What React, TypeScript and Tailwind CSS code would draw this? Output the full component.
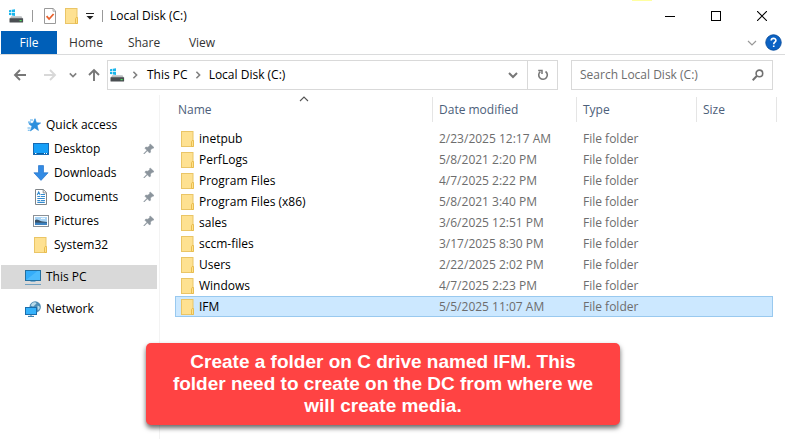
import type { ReactNode } from "react";

type IconProps = { className?: string };

function DriveIcon({ className = "" }: IconProps) {
  return (
    <svg className={`shrink-0 ${className}`} width="16" height="16" viewBox="0 0 16 16" aria-hidden="true">
      <path d="M1 2.2 3.4 1.800v2.400H1zM4 1.700 7 1.200v3H4zM1 4.900h2.400v2.400L1 6.900zM4 4.900h3v3l-3-.5z" fill="#19b5ec" />
      <path d="M3.200 8.200h10.300L15 11H1.600z" fill="#b9bcbf" />
      <rect x="1.500" y="10.200" width="13.600" height="4.300" rx=".6" fill="#4a4e52" />
      <rect x="11.600" y="12" width="2" height="1.200" fill="#4be35b" />
    </svg>
  );
}

function FolderIcon({ className = "" }: IconProps) {
  return (
    <svg className={`shrink-0 ${className}`} width="14" height="16" viewBox="0 0 14 16" aria-hidden="true">
      <rect x=".5" y=".5" width="11.500" height="15" fill="#fee191" stroke="#eac566" />
      <path d="M10.500 15.500v-4.700l.7-1.300h1.300v6z" fill="#ffe28a" stroke="#e6b94a" strokeWidth=".9" />
    </svg>
  );
}

function PropertiesIcon() {
  return (
    <svg className="shrink-0" width="14" height="16" viewBox="0 0 14 16" aria-hidden="true">
      <path d="M1.500.5h8.600l2.400 2.400v12.600h-11z" fill="#fff" stroke="#9a9a9a" />
      <path d="M10 .8v2.400h2.400" fill="none" stroke="#9a9a9a" strokeWidth=".8" />
      <path d="m3.600 8.200 2.500 2.800 4.500-5" fill="none" stroke="#e8602c" strokeWidth="1.800" />
    </svg>
  );
}

function StarIcon() {
  return (
    <svg className="shrink-0" width="16" height="16" viewBox="0 0 16 16" aria-hidden="true">
      <path d="m9 1.700 1.400 4.100 4.200.2-3.500 2.600 1.300 4.800-3.700-2.500-4.300 3 1.600-4.600-3.200-2.600 4.400-.6z" fill="#2b8fdd" stroke="#2b8fdd" strokeWidth=".7" />
      <path d="M4 3h3M2 5.100h3M1.500 11h3M1.800 13.200h2" stroke="#5fb0ea" strokeWidth="1.100" />
    </svg>
  );
}

function DesktopIcon() {
  return (
    <svg className="shrink-0" width="16" height="16" viewBox="0 0 16 16" aria-hidden="true">
      <rect x=".5" y="2.500" width="15" height="11" fill="#17a0f8" stroke="#176ab3" />
      <path d="M1 12.500h14" stroke="#0762a8" />
      <path d="M2 12.500h1.400M11 12.500h1M13 12.500h1" stroke="#fff" />
    </svg>
  );
}

function DownloadIcon() {
  return (
    <svg className="shrink-0" width="16" height="16" viewBox="0 0 16 16" aria-hidden="true">
      <path d="M5.500.6h5v7.200h4.600L8 15.400.9 7.800h4.600z" fill="#338be4" stroke="#2573cb" strokeWidth=".7" />
    </svg>
  );
}

function DocumentIcon() {
  return (
    <svg className="shrink-0" width="16" height="16" viewBox="0 0 16 16" aria-hidden="true">
      <path d="M2.500.5h7.800l3.200 3.200v11.800h-11z" fill="#fff" stroke="#7f8589" />
      <path d="M10.200.7v3.200h3.200" fill="none" stroke="#7f8589" strokeWidth=".9" />
      <path d="m4.200 6 1.500-3 1.500 3M8 5.500h4M4.300 7.500h3M8 7.500h4M4.300 9.500h7.500M4.300 11.500h3M8 11.500h4M4.300 13.400h7.500" fill="none" stroke="#348bcf" strokeWidth="1.100" />
    </svg>
  );
}

function PictureIcon() {
  return (
    <svg className="shrink-0" width="16" height="16" viewBox="0 0 16 16" aria-hidden="true">
      <rect x=".5" y="2.500" width="15" height="11" fill="#fff" stroke="#8b9197" />
      <rect x="2" y="4" width="12" height="8" fill="#a9d4f5" />
      <path d="M2 7.200c2-1.500 3.300-.2 5 .6s4 .8 7 1.200v1.200H2z" fill="#3a5166" />
      <path d="M2 9.600h12V12H2z" fill="#3d83c2" />
      <path d="M8 5.800c1.400-1.300 2.600 0 4-.4" fill="none" stroke="#fff" />
    </svg>
  );
}

function ComputerIcon() {
  return (
    <svg className="shrink-0" width="18" height="16" viewBox="0 0 18 16" aria-hidden="true">
      <rect x="1.500" y="1.500" width="15" height="10" fill="#34adfa" stroke="#246f9f" />
      <path d="M2 11 13.500 2H16v9z" fill="#5cc5ff" opacity=".6" />
      <path d="M6.500 12.500h5" stroke="#77aacc" />
      <path d="M1 15.500h16" stroke="#6f9fbf" />
    </svg>
  );
}

function NetworkIcon() {
  return (
    <svg className="shrink-0" width="18" height="16" viewBox="0 0 18 16" aria-hidden="true">
      <circle cx="11.200" cy="6" r="5.700" fill="#4f8db4" />
      <path d="M8 2.200c2-1.700 4-.9 4.400 0s-1.700 1.200-2 2.400S7.700 5.600 6.700 4.600zM13.400 4.700c1.500-.3 2.400.8 2.400 1.800s-1 2.500-2 2.500z" fill="#b9dae9" />
      <rect x="1.500" y="6.500" width="11" height="7" fill="#35b2fb" stroke="#1a6dac" />
      <path d="M7 13.500v1.500M4 15.400h6" stroke="#2774a8" />
    </svg>
  );
}

function PinIcon() {
  return (
    <svg className="shrink-0" width="12" height="12" viewBox="0 0 12 12" aria-hidden="true">
      <path d="m7.300 1 3.700 3.600-1.100.8-.6-.2-1.800 1.900.1 2-1 1L4.400 7.800 1.200 11l-.4-.4L3.900 7.300 1.800 5l1.100-.9 2 .1 1.900-1.800-.3-.6z" fill="#8b949c" stroke="#8b949c" strokeWidth=".5" />
    </svg>
  );
}

function Chevron({ dir, color = "#808080", size = 8, width = 1.5 }: { dir: "down" | "right" | "up"; color?: string; size?: number; width?: number }) {
  const d = { down: "m1 3 4 4 4-4", right: "m3 1 4 4-4 4", up: "m1 7 4-4 4 4" }[dir];
  return (
    <svg className="shrink-0" width={size} height={size} viewBox="0 0 10 10" aria-hidden="true">
      <path d={d} fill="none" stroke={color} strokeWidth={width} />
    </svg>
  );
}

function Arrow({ dir, color }: { dir: "left" | "right" | "up"; color: string }) {
  const d = {
    left: "M13 7H2M7 2 2 7l5 5",
    right: "M1 7h11M7 2l5 5-5 5",
    up: "M7 13V2M2 7l5-5 5 5",
  }[dir];
  return (
    <svg className="shrink-0" width="14" height="14" viewBox="0 0 14 14" aria-hidden="true">
      <path d={d} fill="none" stroke={color} strokeWidth="1.900" />
    </svg>
  );
}

const tabs = ["Home", "Share", "View"];

const quickAccess: { label: string; icon: ReactNode; pinned: boolean }[] = [
  { label: "Desktop", icon: <DesktopIcon />, pinned: true },
  { label: "Downloads", icon: <DownloadIcon />, pinned: true },
  { label: "Documents", icon: <DocumentIcon />, pinned: true },
  { label: "Pictures", icon: <PictureIcon />, pinned: true },
  { label: "System32", icon: <FolderIcon className="mx-px" />, pinned: false },
];

const files = [
  { name: "inetpub", date: "2/23/2025 12:17 AM" },
  { name: "PerfLogs", date: "5/8/2021 2:20 PM" },
  { name: "Program Files", date: "4/7/2025 2:22 PM" },
  { name: "Program Files (x86)", date: "5/8/2021 3:40 PM" },
  { name: "sales", date: "3/6/2025 12:51 PM" },
  { name: "sccm-files", date: "3/17/2025 8:30 PM" },
  { name: "Users", date: "2/22/2025 2:02 PM" },
  { name: "Windows", date: "4/7/2025 2:23 PM" },
  { name: "IFM", date: "5/5/2025 11:07 AM", selected: true },
];

function TitleBar() {
  return (
    <header className="flex h-[31px] items-center pl-2">
      <DriveIcon />
      <span className="ml-2 h-3 w-px bg-[#999]" />
      <button aria-label="Properties" className="ml-[10px]"><PropertiesIcon /></button>
      <button aria-label="New folder" className="ml-2"><FolderIcon /></button>
      <button aria-label="Customize Quick Access Toolbar" className="ml-[7px]">
        <svg width="8" height="8" viewBox="0 0 8 8" aria-hidden="true">
          <path d="M0 1.500h8" stroke="#222" />
          <path d="M.5 4h7L4 7.500z" fill="#222" />
        </svg>
      </button>
      <span className="ml-2 h-3 w-px bg-[#999]" />
      <h1 className="ml-[7px] flex-1 whitespace-nowrap text-black">Local Disk (C:)</h1>
      <div className="flex">
        <button aria-label="Minimize" className="grid h-[30px] w-[46px] place-items-center">
          <svg width="10" height="10" viewBox="0 0 10 10"><path d="M0 5.500h10" stroke="#000" /></svg>
        </button>
        <button aria-label="Maximize" className="grid h-[30px] w-[46px] place-items-center">
          <svg width="10" height="10" viewBox="0 0 10 10"><rect x=".5" y=".5" width="9" height="9" fill="none" stroke="#000" /></svg>
        </button>
        <button aria-label="Close" className="grid h-[30px] w-[46px] place-items-center">
          <svg width="10" height="10" viewBox="0 0 10 10"><path d="m0 0 10 10M10 0 0 10" stroke="#000" strokeWidth="1.100" /></svg>
        </button>
      </div>
    </header>
  );
}

function Ribbon() {
  return (
    <nav className="flex h-6 items-stretch border-b border-[#dadbdc] pl-px">
      <button className="w-14 bg-[#005fb8] text-white">File</button>
      {tabs.map((tab) => (
        <button key={tab} className="w-[58px] text-[#333]">{tab}</button>
      ))}
      <div className="ml-auto flex items-center gap-2 pr-[3px]">
        <button aria-label="Expand the Ribbon"><Chevron dir="down" color="#999" size={10} width={1.2} /></button>
        <button aria-label="Help">
          <svg width="17" height="17" viewBox="0 0 17 17" aria-hidden="true">
            <circle cx="8.500" cy="8.500" r="7.700" fill="#0b62c4" stroke="#0a4f9f" />
            <path d="M6.200 6.600c0-3 4.700-2.900 4.700-.2 0 1.700-2.200 1.900-2.200 3.800M8.700 11.500v1.600" fill="none" stroke="#fff" strokeWidth="1.600" />
          </svg>
        </button>
      </div>
    </nav>
  );
}

function AddressRow() {
  return (
    <div className="flex items-center py-[5px] pr-3 pl-[13px]">
      <button aria-label="Back"><Arrow dir="left" color="#777" /></button>
      <button aria-label="Forward" className="ml-4"><Arrow dir="right" color="#d8d8d8" /></button>
      <button aria-label="Recent locations" className="ml-3"><Chevron dir="down" width={2} /></button>
      <button aria-label="Up" className="ml-[10px]"><Arrow dir="up" color="#777" /></button>
      <div className="ml-[6px] flex h-[30px] min-w-0 flex-1 border border-[#d9d9d9]">
        <div className="flex min-w-0 flex-1 items-center whitespace-nowrap pl-px text-black">
          <DriveIcon />
          <span className="ml-[6px] flex"><Chevron dir="right" width={2} /></span>
          <button className="ml-2">This PC</button>
          <span className="ml-[6px] flex"><Chevron dir="right" width={2} /></span>
          <button className="ml-[7px]">Local Disk (C:)</button>
        </div>
        <button aria-label="Previous locations" className="grid w-7 place-items-center"><Chevron dir="down" size={10} width={2} color="#777" /></button>
        <button aria-label="Refresh" className="grid w-[30px] place-items-center border-l border-[#d9d9d9]">
          <svg width="12" height="12" viewBox="0 0 12 12" aria-hidden="true">
            <path d="M8.500 2.500A4.300 4.300 0 1 1 3.300 2.700" fill="none" stroke="#777" strokeWidth="1.600" />
            <path d="M1.200 1.400H5v3.700" fill="none" stroke="#777" strokeWidth="1.500" />
          </svg>
        </button>
      </div>
      <label className="ml-[13px] flex h-[30px] w-[202px] items-center border border-[#d9d9d9] pr-2 pl-2">
        <input aria-label="Search Local Disk (C:)" placeholder="Search Local Disk (C:)" className="min-w-0 flex-1 outline-none placeholder:text-[#6d6d6d]" />
        <svg width="12" height="12" viewBox="0 0 12 12" aria-hidden="true">
          <circle cx="7.400" cy="4.400" r="3.300" fill="none" stroke="#707070" strokeWidth="1.600" />
          <path d="M5 6.800.7 11.200" stroke="#707070" strokeWidth="2" />
        </svg>
      </label>
    </div>
  );
}

function Sidebar() {
  return (
    <aside className="w-40 shrink-0 border-r border-[#f3f3f3] pt-[18px] pr-[2px] pl-px text-black">
      <a href="#quick" className="flex h-6 items-center gap-1 pl-[25px]"><StarIcon />Quick access</a>
      {quickAccess.map((item) => (
        <a key={item.label} href="#folder" className="flex h-6 items-center gap-[5px] pr-[2px] pl-8">
          {item.icon}
          <span className="flex-1">{item.label}</span>
          {item.pinned && <PinIcon />}
        </a>
      ))}
      <a href="#pc" className="mt-2 flex h-6 items-center gap-1 bg-[#d9d9d9] pl-[23px]"><ComputerIcon />This PC</a>
      <a href="#network" className="mt-2 flex h-6 items-center gap-1 pl-[23px]"><NetworkIcon />Network</a>
    </aside>
  );
}

function FileList() {
  return (
    <main className="min-w-0 flex-1 pt-[2px] pr-3 pl-[15px]">
      <table className="w-full table-fixed border-separate border-spacing-0 text-left">
        <thead className="text-[#4c607a]">
          <tr className="h-[31px] align-top">
            <th className="p-0 font-normal">
              <div className="relative flex h-[25px] items-center pl-[3px]">
                Name
                <span className="absolute -top-[3px] left-1/2 flex -translate-x-1/2"><Chevron dir="up" size={10} width={1.1} color="#555" /></span>
              </div>
            </th>
            <th className="w-36 p-0 font-normal"><div className="flex h-[25px] items-center border-l border-[#e5e5e5] pl-[6px]">Date modified</div></th>
            <th className="w-30 p-0 font-normal"><div className="flex h-[25px] items-center border-l border-[#e5e5e5] pl-[6px]">Type</div></th>
            <th className="w-[77px] p-0 font-normal"><div className="-mr-1 flex h-[25px] items-center border-x border-[#e5e5e5] pl-[6px]">Size</div></th>
          </tr>
        </thead>
        <tbody className="leading-[19px] text-[#6d6d6d]">
          {files.map((file) => (
            <tr
              key={file.name}
              className={
                file.selected
                  ? "bg-[#cce8ff] *:border-y *:border-[#99c9ef] *:first:border-l *:last:border-r"
                  : "*:border-y *:border-transparent *:first:border-l"
              }
            >
              <td className="p-0 text-black">
                <div className="flex h-[19px] items-center gap-1 pl-[5px]"><FolderIcon />{file.name}</div>
              </td>
              <td className="p-0 pl-[7px]">{file.date}</td>
              <td className="p-0 pl-[7px]">File folder</td>
              <td className="p-0" />
            </tr>
          ))}
        </tbody>
      </table>
    </main>
  );
}

export default function App() {
  return (
    <div className="relative flex min-h-screen flex-col overflow-hidden bg-white font-['Open_Sans','Noto_Sans',sans-serif] text-[12px] leading-4">
      <span className="absolute top-0 right-[133px] h-px w-5 bg-[#ffffa0]" />
      <TitleBar />
      <Ribbon />
      <AddressRow />
      <div className="flex flex-1">
        <Sidebar />
        <FileList />
      </div>
      <p
        role="note"
        className="absolute top-[343px] left-[146px] w-[474px] rounded-[5px] bg-[#ff4343] px-4 py-2 text-center font-['Liberation_Sans',Arial,sans-serif] text-[19px] leading-[22px] font-bold text-white shadow-[0_3px_5px_rgba(0,0,0,0.6)]"
      >
        Create a folder on C drive named IFM. This folder need to create on the DC from where we will create media.
      </p>
    </div>
  );
}
